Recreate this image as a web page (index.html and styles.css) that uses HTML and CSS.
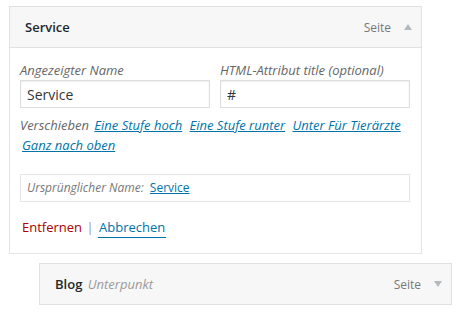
FILE: index.html
```html
<!DOCTYPE html>
<html lang="de">
<head>
    <meta charset="UTF-8">
    <title>Menü</title>
    <link rel="stylesheet" href="styles.css">
</head>
<body>
    <ul class="menu">
        <li class="menu-item">
            <div class="item-bar">
                <span class="item-title">Service</span>
                <span class="item-controls">
                    <span class="item-type">Seite</span>
                    <span class="item-toggle up"></span>
                </span>
            </div>
            <div class="item-settings">
                <div class="field-row">
                    <div class="field">
                        <label for="nav-label">Angezeigter Name</label>
                        <input type="text" id="nav-label" value="Service">
                    </div>
                    <div class="field">
                        <label for="nav-title">HTML-Attribut title (optional)</label>
                        <input type="text" id="nav-title" value="#">
                    </div>
                </div>
                <p class="move">Verschieben <a href="#">Eine Stufe hoch</a> <a href="#">Eine Stufe runter</a> <a href="#">Unter Für Tierärzte</a> <a href="#">Ganz nach oben</a></p>
                <div class="original">Ursprünglicher Name: <a href="#">Service</a></div>
                <div class="actions">
                    <a href="#" class="delete">Entfernen</a> <span class="sep">|</span> <a href="#" class="cancel">Abbrechen</a>
                </div>
            </div>
        </li>
        <li class="menu-item depth-1">
            <div class="item-bar">
                <span class="item-title">Blog <span class="sub">Unterpunkt</span></span>
                <span class="item-controls">
                    <span class="item-type">Seite</span>
                    <span class="item-toggle down"></span>
                </span>
            </div>
        </li>
        <li class="menu-item depth-1">
            <div class="item-bar"></div>
        </li>
    </ul>
</body>
</html>
```

FILE: styles.css
```css
body {
    margin: 0;
    background: #fff;
    font-family: "Open Sans", "Liberation Sans", sans-serif;
    font-size: 13px;
    color: #444;
}
.menu {
    list-style: none;
    margin: 0;
    padding: 6px 0 0 9px;
}
.menu-item {
    width: 413px;
    margin-bottom: 9px;
}
.menu-item.depth-1 {
    margin-left: 30px;
}
.item-bar {
    box-sizing: border-box;
    height: 42px;
    display: flex;
    align-items: center;
    justify-content: space-between;
    padding: 0 9px 0 15px;
    background: #f7f7f7;
    border: 1px solid #e1e1e1;
}
.item-title {
    font-weight: 600;
    color: #23282d;
}
.item-title .sub {
    font-weight: 400;
    font-style: italic;
    color: #999;
    margin-left: 2px;
}
.item-controls {
    display: flex;
    align-items: center;
}
.item-type {
    font-size: 12px;
    color: #777;
}
.item-toggle {
    width: 0;
    height: 0;
    margin-left: 13px;
    border-left: 4px solid transparent;
    border-right: 4px solid transparent;
}
.item-toggle.up {
    border-bottom: 6px solid #b4b9be;
}
.item-toggle.down {
    border-top: 6px solid #b4b9be;
}
.item-settings {
    padding: 12px 11px 16px 10px;
    border: 1px solid #e5e5e5;
    border-top: none;
}
.field-row {
    display: flex;
    gap: 10px;
}
.field {
    width: 190px;
}
.field label {
    display: block;
    line-height: 20px;
    font-style: italic;
    color: #666;
}
.field input {
    box-sizing: border-box;
    width: 100%;
    height: 28px;
    margin: 0;
    padding: 3px 6px;
    font-family: inherit;
    font-size: 14px;
    color: #32373c;
    border: 1px solid #ddd;
    box-shadow: inset 0 1px 2px rgba(0, 0, 0, 0.07);
    outline: none;
}
.move {
    margin: 7px 0 0;
    line-height: 20px;
    font-style: italic;
    color: #666;
}
.move a {
    margin: 0 2px;
    color: #0073aa;
}
.original {
    box-sizing: border-box;
    height: 28px;
    margin-top: 19px;
    padding: 0 6px;
    line-height: 26px;
    font-size: 12px;
    font-style: italic;
    color: #777;
    border: 1px solid #e5e5e5;
}
.original a {
    margin-left: 3px;
    font-style: normal;
    color: #0073aa;
}
.actions {
    margin-top: 15px;
    padding-left: 2px;
    line-height: 20px;
}
.actions .delete {
    color: #a00;
    text-decoration: none;
}
.actions .sep {
    color: #999;
    margin: 0 1px;
}
.actions .cancel {
    color: #0073aa;
    text-decoration: none;
    border-bottom: 1px solid #0073aa;
    padding: 0 1px 1px;
}
```
